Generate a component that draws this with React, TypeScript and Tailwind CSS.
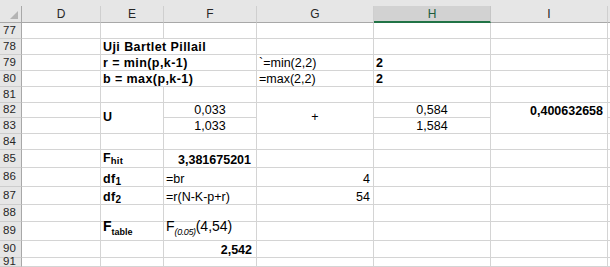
import React from "react";
import { twMerge } from "tailwind-merge";

type CellProps = { children?: React.ReactNode; className?: string };

// A worksheet cell: bottom-aligned text, light gridlines on the right and bottom.
// Cells stay transparent so long text can spill over empty neighbours.
function Cell({ children, className = "" }: CellProps) {
  return (
    <div
      className={twMerge(
        "flex items-end whitespace-nowrap border-b border-r border-[#d4d4d4] px-[2px] pb-[1px] text-[12.5px] leading-[11px] text-black",
        className
      )}
    >
      {children}
    </div>
  );
}

function RowHead({ n }: { n: number }) {
  return (
    <div className="flex items-center border-b border-r border-b-[#cdcdcd] border-r-[#a8a8a8] bg-[#e6e6e6] pl-[3px] text-[11.5px] leading-none text-[#262626]">
      {n}
    </div>
  );
}

function ColHead({ label, active = false }: { label: string; active?: boolean }) {
  return active ? (
    <div className="flex items-center justify-center border-b-2 border-r border-b-[#217346] border-r-[#c6c6c6] bg-[#d2d2d2] pt-[1px] text-[12px] leading-none text-[#1d5c3d]">
      {label}
    </div>
  ) : (
    <div className="flex items-center justify-center border-b border-r border-b-[#a8a8a8] border-r-[#cfcfcf] bg-[#e6e6e6] text-[12px] leading-none text-[#262626]">
      {label}
    </div>
  );
}

function EmptyRow({ n }: { n: number }) {
  return (
    <>
      <RowHead n={n} />
      <Cell />
      <Cell />
      <Cell />
      <Cell />
      <Cell />
      <Cell />
      <Cell className="border-r-0" />
    </>
  );
}

export default function App() {
  return (
    <div className="h-[267px] w-[610px] overflow-hidden bg-white font-['Liberation_Sans',Arial,sans-serif]">
      <div className="h-[6px] bg-[#e6e6e6]" />
      <div className="grid grid-cols-[22px_79px_63px_93px_117px_117px_117px_1fr] grid-rows-[17px_16px_16px_16px_16px_16px_15px_16px_16px_18px_19px_18px_17px_19px_17px_9px]">
        {/* column headers */}
        <div className="relative border-b border-r border-b-[#a8a8a8] border-r-[#a8a8a8] bg-[#e6e6e6]">
          <svg className="absolute bottom-[3px] right-[3px]" width="8" height="8" viewBox="0 0 8 8">
            <polygon points="8,0 8,8 0,8" fill="#b4b4b4" />
          </svg>
        </div>
        <ColHead label="D" />
        <ColHead label="E" />
        <ColHead label="F" />
        <ColHead label="G" />
        <ColHead label="H" active />
        <ColHead label="I" />
        <div className="border-b border-b-[#a8a8a8] bg-[#e6e6e6]" />

        <EmptyRow n={77} />

        {/* 78 */}
        <RowHead n={78} />
        <Cell />
        <Cell className="border-r-0 font-bold tracking-[0.42px]">Uji Bartlet Pillail</Cell>
        <Cell />
        <Cell />
        <Cell />
        <Cell />
        <Cell className="border-r-0" />

        {/* 79 */}
        <RowHead n={79} />
        <Cell />
        <Cell className="border-r-0 font-bold tracking-[0.42px]">r = min(p,k-1)</Cell>
        <Cell />
        <Cell>`=min(2,2)</Cell>
        <Cell className="font-bold">2</Cell>
        <Cell />
        <Cell className="border-r-0" />

        {/* 80 */}
        <RowHead n={80} />
        <Cell />
        <Cell className="border-r-0 font-bold tracking-[0.42px]">b = max(p,k-1)</Cell>
        <Cell />
        <Cell>=max(2,2)</Cell>
        <Cell className="font-bold">2</Cell>
        <Cell />
        <Cell className="border-r-0" />

        <EmptyRow n={81} />

        {/* 82 */}
        <RowHead n={82} />
        <Cell />
        <Cell className="row-span-2 items-center pb-[2px] font-bold">U</Cell>
        <Cell className="justify-center">0,033</Cell>
        <Cell className="row-span-2 items-center justify-center pb-[2px]">+</Cell>
        <Cell className="justify-center">0,584</Cell>
        <Cell className="row-span-2 items-start justify-end pr-[4px] pt-[3px] font-bold">0,400632658</Cell>
        <Cell className="border-r-0" />

        {/* 83 */}
        <RowHead n={83} />
        <Cell />
        <Cell className="justify-center">1,033</Cell>
        <Cell className="justify-center">1,584</Cell>
        <Cell className="border-r-0" />

        <EmptyRow n={84} />

        {/* 85 */}
        <RowHead n={85} />
        <Cell />
        <Cell className="pb-[3px] font-bold">
          <span>F</span>
          <span className="relative top-[2px] text-[9.5px] tracking-[0.3px]">hit</span>
        </Cell>
        <Cell className="justify-end pr-[5px] font-bold">3,381675201</Cell>
        <Cell />
        <Cell />
        <Cell />
        <Cell className="border-r-0" />

        {/* 86 */}
        <RowHead n={86} />
        <Cell />
        <Cell className="font-bold tracking-[0.3px]">
          <span>df</span>
          <span className="relative top-[2px] text-[10px]">1</span>
        </Cell>
        <Cell>=br</Cell>
        <Cell className="justify-end pr-[3px]">4</Cell>
        <Cell />
        <Cell />
        <Cell className="border-r-0" />

        {/* 87 */}
        <RowHead n={87} />
        <Cell />
        <Cell className="font-bold tracking-[0.3px]">
          <span>df</span>
          <span className="relative top-[2px] text-[10px]">2</span>
        </Cell>
        <Cell>=r(N-K-p+r)</Cell>
        <Cell className="justify-end pr-[3px]">54</Cell>
        <Cell />
        <Cell />
        <Cell className="border-r-0" />

        <EmptyRow n={88} />

        {/* 89 */}
        <RowHead n={89} />
        <Cell />
        <Cell className="pb-[3px] text-[14px] font-bold">
          <span>F</span>
          <span className="relative top-[2px] text-[9px]">table</span>
        </Cell>
        <Cell className="pb-[3px] text-[14px]">
          <span>F</span>
          <span className="relative top-[2px] text-[9px] italic tracking-[-0.4px]">(0.05)</span>
          <span>(4,54)</span>
        </Cell>
        <Cell />
        <Cell />
        <Cell />
        <Cell className="border-r-0" />

        {/* 90 */}
        <RowHead n={90} />
        <Cell />
        <Cell />
        <Cell className="justify-end pr-[4px] font-bold">2,542</Cell>
        <Cell />
        <Cell />
        <Cell />
        <Cell className="border-r-0" />

        <EmptyRow n={91} />
      </div>
    </div>
  );
}
